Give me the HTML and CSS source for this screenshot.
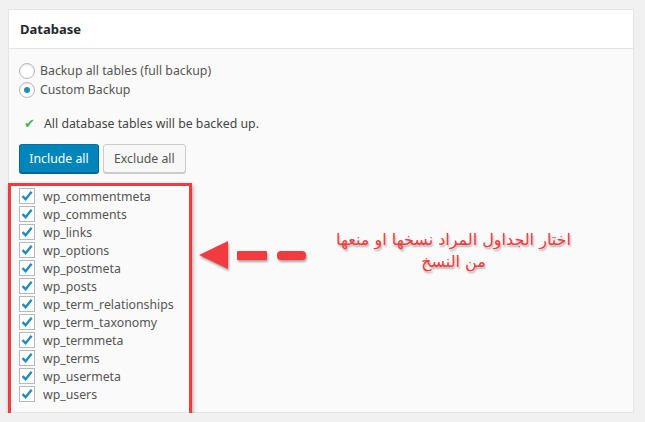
FILE: index.html
```html
<!DOCTYPE html>
<html lang="en">
<head>
<meta charset="UTF-8">
<title>Database backup</title>
<link rel="stylesheet" href="styles.css">
</head>
<body>

<div class="postbox">
    <h2 class="hndle">Database</h2>

    <div class="inside">
        <label class="radio"><span class="radio-dot"></span>Backup all tables (full backup)</label>
        <label class="radio"><span class="radio-dot checked"></span>Custom Backup</label>

        <p class="note"><span class="tick">&#10004;</span>All database tables will be backed up.</p>

        <div class="buttons">
            <button class="button primary">Include all</button>
            <button class="button">Exclude all</button>
        </div>

        <div class="tables-row">
            <ul class="tables">
                <li><span class="box"></span>wp_commentmeta</li>
                <li><span class="box"></span>wp_comments</li>
                <li><span class="box"></span>wp_links</li>
                <li><span class="box"></span>wp_options</li>
                <li><span class="box"></span>wp_postmeta</li>
                <li><span class="box"></span>wp_posts</li>
                <li><span class="box"></span>wp_term_relationships</li>
                <li><span class="box"></span>wp_term_taxonomy</li>
                <li><span class="box"></span>wp_termmeta</li>
                <li><span class="box"></span>wp_terms</li>
                <li><span class="box"></span>wp_usermeta</li>
                <li><span class="box"></span>wp_users</li>
            </ul>

            <div class="hint">
                <svg class="arrow" width="110" height="30" viewBox="0 0 110 30">
                    <polygon points="0,14 29,0 29,28" fill="#f23b3e"/>
                    <rect x="38" y="10" width="30" height="9" rx="1" fill="#f23b3e"/>
                    <rect x="78" y="10" width="29" height="9" rx="4" fill="#f23b3e"/>
                </svg>
                <p class="hint-text">اختار الجداول المراد نسخها او منعها<br>من النسخ</p>
            </div>
        </div>
    </div>
</div>

</body>
</html>
```

FILE: styles.css
```css
body {
    margin: 0;
    padding: 9px 11px 0 8px;
    background: #f1f1f1;
    font-family: 'Noto Sans', 'Open Sans', sans-serif;
    font-size: 12.3px;
    color: #444;
}

/* Card */
.postbox {
    background: #fafafa;
    border: 1px solid #e5e5e5;
    height: 404px;
    box-sizing: border-box;
}
.hndle {
    margin: 0;
    height: 38px;
    line-height: 38px;
    padding: 0 11px;
    background: #fff;
    border-bottom: 1px solid #e5e5e5;
    font-size: 13px;
    font-weight: 700;
    color: #23282d;
}
.inside {
    padding: 12px 10px 0 10px;
}

/* Radios */
.radio {
    display: flex;
    align-items: center;
    height: 19px;
    color: #555;
}
.radio-dot {
    width: 14px;
    height: 14px;
    border: 1px solid #b4b9be;
    border-radius: 50%;
    background: #fff;
    margin-right: 5px;
    box-shadow: inset 0 1px 2px rgba(0,0,0,0.1);
    display: flex;
    align-items: center;
    justify-content: center;
}
.radio-dot.checked::after {
    content: "";
    width: 6px;
    height: 6px;
    border-radius: 50%;
    background: #1e8cbe;
}

.note {
    margin: 15px 0 0 5px;
    display: flex;
    align-items: center;
    color: #444;
}
.tick {
    color: #46b450;
    font-size: 13px;
    margin-right: 9px;
}

/* Buttons */
.buttons {
    display: flex;
    gap: 4px;
    margin-top: 12px;
}
.button {
    font-family: inherit;
    font-size: 12.3px;
    height: 29px;
    padding: 0 10px;
    border-radius: 3px;
    border: 1px solid #ccc;
    background: #f7f7f7;
    color: #555;
    white-space: nowrap;
    box-shadow: 0 1px 0 #ccc;
}
.button.primary {
    width: 80px;
    padding: 0;
    background: #0085ba;
    border-color: #0073aa #006799 #006799;
    color: #fff;
    box-shadow: 0 1px 0 #006799;
}

/* Table list with annotation */
.tables-row {
    display: flex;
    align-items: flex-start;
    margin-top: 10px;
    margin-left: -11px;
}
.tables {
    list-style: none;
    margin: 0;
    padding: 1px 0 10px 8px;
    width: 170px;
    height: 216px;
    border: 3px solid #f23b3e;
    box-shadow: 1px 2px 4px rgba(0,0,0,0.35);
    box-sizing: content-box;
}
.tables li {
    display: flex;
    align-items: center;
    height: 18px;
    color: #555;
}
.box {
    width: 14px;
    height: 14px;
    border: 1px solid #b4b9be;
    background: #fff url("data:image/svg+xml,%3Csvg xmlns='http://www.w3.org/2000/svg' viewBox='0 0 14 14'%3E%3Cpath d='M2.5 7.2 L5.6 10.2 L11.6 2.8' fill='none' stroke='%231e8cbe' stroke-width='2.4'/%3E%3C/svg%3E") center / 14px 14px no-repeat;
    margin-right: 8px;
}

.hint {
    display: flex;
    align-items: flex-start;
    margin-top: 58px;
    margin-left: 7px;
}
.arrow {
    filter: drop-shadow(1px 2px 1px rgba(0,0,0,0.35));
}
.hint-text {
    margin: -12px 0 0 12px;
    width: 265px;
    text-align: center;
    direction: rtl;
    font-family: 'DejaVu Sans', sans-serif;
    font-size: 16px;
    line-height: 22px;
    color: #f23b3e;
    text-shadow: 1px 2px 2px rgba(0,0,0,0.3);
}
```
